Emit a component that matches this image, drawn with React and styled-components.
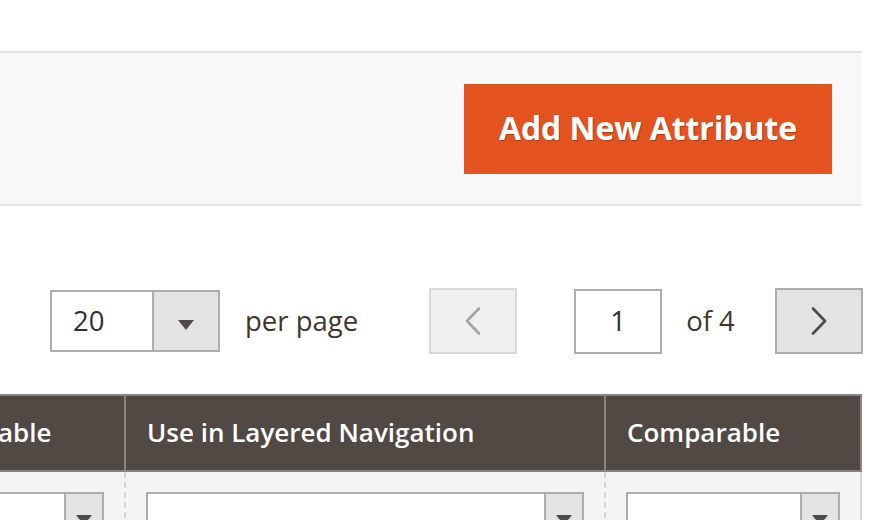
import React from "react";
import styled, { createGlobalStyle } from "styled-components";

const GlobalStyle = createGlobalStyle`
  html, body {
    margin: 0;
    padding: 0;
    background: #ffffff;
    overflow: hidden;
  }
  body {
    font-family: "Open Sans", "Liberation Sans", sans-serif;
    color: #41362f;
  }
  * { box-sizing: border-box; }
`;

const Page = styled.div`
  width: 878px;
  height: 520px;
  padding: 51px 16px 0 0;
  overflow: hidden;
`;

const ActionsBar = styled.div`
  display: flex;
  justify-content: flex-end;
  background: #f8f8f8;
  border-top: 2px solid #e3e3e3;
  border-bottom: 2px solid #e3e3e3;
  padding: 31px 30px 30px 0;
`;

const PrimaryButton = styled.button`
  height: 90px;
  width: 368px;
  border: 0;
  border-radius: 0;
  background: #e4531f;
  color: #ffffff;
  font-family: "Open Sans", "Liberation Sans", sans-serif;
  font-weight: 700;
  font-size: 32px;
  letter-spacing: -0.1px;
  white-space: nowrap;
  text-shadow: 1px 1px 0 rgba(0, 0, 0, 0.25);
  padding: 0 0 4px;
  cursor: pointer;
`;

const Pager = styled.div`
  display: flex;
  align-items: center;
  height: 66px;
  margin-top: 82px;
  padding-left: 50px;
`;

const PerPageSelect = styled.div`
  display: flex;
  flex-shrink: 0;
  width: 170px;
  height: 62px;
  border: 2px solid #adadad;
  background: #ffffff;
`;

const SelectValue = styled.div`
  flex: 1;
  display: flex;
  align-items: center;
  padding-left: 21px;
  font-size: 27.5px;
  color: #303030;
  padding-bottom: 2px;
`;

const ArrowBox = styled.div`
  width: ${(p) => p.$w}px;
  display: flex;
  align-items: center;
  justify-content: center;
  background: #e3e3e3;
  border-left: 2px solid #adadad;
  padding-top: ${(p) => p.$offset || 0}px;
`;

const Triangle = styled.span`
  width: 0;
  height: 0;
  border-left: 8px solid transparent;
  border-right: 8px solid transparent;
  border-top: 10px solid #514943;
`;

const Label = styled.span`
  flex-shrink: 0;
  white-space: nowrap;
  font-size: 27.5px;
  color: #41362f;
  margin-left: ${(p) => p.$ml}px;
  padding-bottom: 2px;
`;

const NavButton = styled.button`
  flex-shrink: 0;
  width: 88px;
  height: 66px;
  margin-left: ${(p) => p.$ml}px;
  display: flex;
  align-items: center;
  justify-content: center;
  padding: 0;
  border-radius: 0;
  border: 2px solid ${(p) => (p.disabled ? "#d9d9d9" : "#adadad")};
  background: ${(p) => (p.disabled ? "#f0f0f0" : "#e3e3e3")};
  color: ${(p) => (p.disabled ? "#aaa29c" : "#514943")};
`;

const PageInput = styled.div`
  flex-shrink: 0;
  width: 88px;
  height: 65px;
  margin-left: 57px;
  border: 2px solid #adadad;
  background: #ffffff;
  display: flex;
  align-items: center;
  justify-content: center;
  font-size: 27.5px;
  color: #303030;
  padding-bottom: 2px;
`;

const Grid = styled.div`
  margin-left: -110px;
  width: 972px;
`;

const HeaderRow = styled.div`
  display: grid;
  grid-template-columns: 234px 480px 254px;
  margin-top: 40px;
  background: #514943;
  border: 2px solid #8a837f;
`;

const HeaderCell = styled.div`
  height: 74px;
  display: flex;
  align-items: center;
  padding: 0 20px 2px 21px;
  color: #ffffff;
  font-size: 26px;
  font-weight: 600;
  white-space: nowrap;
  border-right: ${(p) => (p.$last ? "0" : "2px solid #8a837f")};
`;

const FilterRow = styled.div`
  display: grid;
  grid-template-columns: 234px 480px 254px;
  background: #f4f4f4;
  border-left: 2px solid #d6d6d6;
  border-right: 2px solid #d6d6d6;
  height: 60px;
`;

const FilterCell = styled.div`
  padding: 20px 20px 0 20px;
  border-right: ${(p) => (p.$last ? "0" : "2px dashed #d6d6d6")};
`;

const FilterSelect = styled.div`
  display: flex;
  justify-content: flex-end;
  height: 56px;
  border: 2px solid #adadad;
  background: #ffffff;
`;

const Chevron = ({ dir }) => (
  <svg width="16" height="28" viewBox="0 0 16 28" fill="none">
    <polyline
      points={dir === "left" ? "14,1.5 2,14 14,26.5" : "2,1.5 14,14 2,26.5"}
      stroke="currentColor"
      strokeWidth="2.6"
      strokeLinecap="round"
      strokeLinejoin="round"
    />
  </svg>
);

const Select = () => (
  <FilterSelect>
    <ArrowBox $w={38}>
      <Triangle />
    </ArrowBox>
  </FilterSelect>
);

export default function App() {
  const columns = ["Searchable", "Use in Layered Navigation", "Comparable"];
  return (
    <>
      <GlobalStyle />
      <Page>
        <ActionsBar>
          <PrimaryButton>Add New Attribute</PrimaryButton>
        </ActionsBar>

        <Pager>
          <PerPageSelect>
            <SelectValue>20</SelectValue>
            <ArrowBox $w={66} $offset={8}>
              <Triangle />
            </ArrowBox>
          </PerPageSelect>
          <Label $ml={25}>per page</Label>
          <NavButton $ml={71} disabled>
            <Chevron dir="left" />
          </NavButton>
          <PageInput>1</PageInput>
          <Label $ml={24}>of 4</Label>
          <NavButton $ml={40}>
            <Chevron dir="right" />
          </NavButton>
        </Pager>

        <Grid>
          <HeaderRow>
            {columns.map((c, i) => (
              <HeaderCell key={c} $last={i === columns.length - 1}>
                {c}
              </HeaderCell>
            ))}
          </HeaderRow>
          <FilterRow>
            {columns.map((c, i) => (
              <FilterCell key={c} $last={i === columns.length - 1}>
                <Select />
              </FilterCell>
            ))}
          </FilterRow>
        </Grid>
      </Page>
    </>
  );
}
